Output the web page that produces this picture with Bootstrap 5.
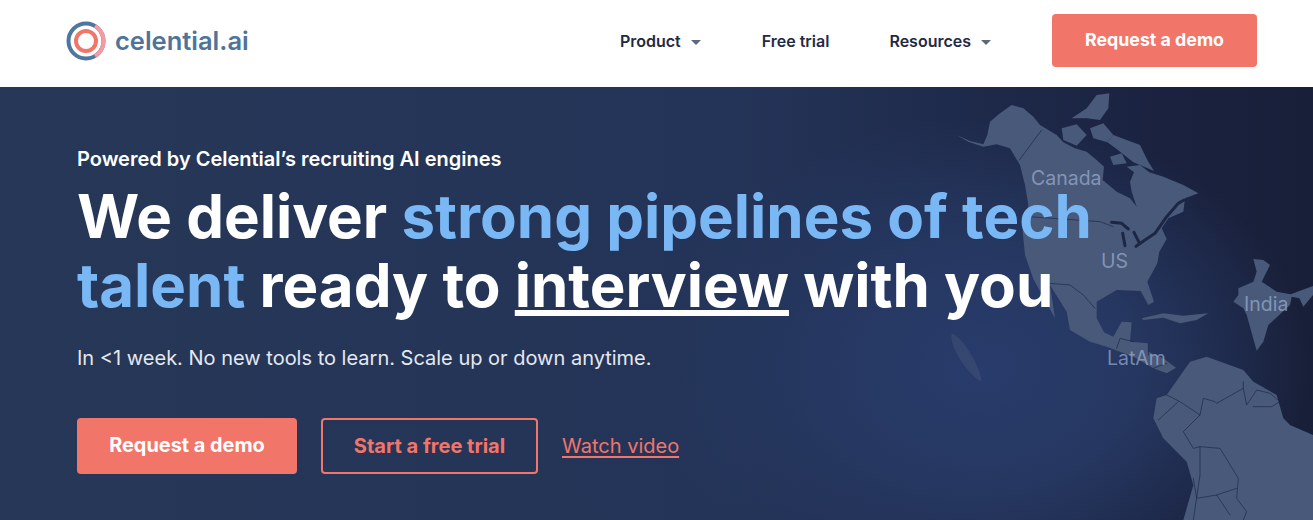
<!doctype html>
<html lang="en"><head><meta charset="utf-8"><title>celential.ai</title>
<link href="https://cdn.jsdelivr.net/npm/bootstrap@5.3.0/dist/css/bootstrap.min.css" rel="stylesheet">
<style>
body{font-family:Inter,"Liberation Sans",sans-serif;background:#1c2642;overflow:hidden;height:520px}
.top-bar{height:87px;background:#fff;padding:0 56px 6px 66px}
.brand-name{font-size:25.5px;font-weight:600;color:#4f7399;line-height:1;margin-left:1px}
.top-link{font-size:16px;font-weight:600;color:#1f2a44;text-decoration:none;line-height:1}
.caret-mark{display:inline-block;width:0;height:0;border-left:5.5px solid transparent;border-right:5.5px solid transparent;border-top:5.5px solid #5c6780;margin-left:10px;vertical-align:2px}
.link-list{gap:60px;margin-right:61px}
.wide-caret{margin-right:1px}
.coral-btn{background:#f2756a;color:#fff;border:0;border-radius:4px;font-weight:700;display:inline-flex;align-items:center;justify-content:center}
.coral-btn:hover{background:#f2756a;color:#fff}
.nav-cta{width:205px;height:53px;font-size:17.8px}
.hero-band{height:433px;padding:59px 0 0 77px;overflow:hidden;
background:radial-gradient(ellipse 330px 250px at 980px 280px,#283b6b 0%,#263862 45%,rgba(36,52,88,0) 100%),linear-gradient(90deg,#273757 0%,#243458 55%,#1f2b4c 72%,#1a2240 88%,#181f38 100%)}
.hero-content{z-index:2}
.pre-title{font-size:20px;font-weight:600;color:#fff;line-height:26px;margin:0 0 10px}
.main-title{font-size:60px;font-weight:700;color:#fff;line-height:69px;margin:0 0 24px;width:1040px;letter-spacing:-.01px}
.sky{color:#7ab8f5}
.main-title u{text-decoration-thickness:6px;text-underline-offset:3px}
.sub-title{font-size:20px;color:#e4e8f0;line-height:28px;margin:0 0 46px}
.hero-cta{width:220px;height:56px;font-size:19.9px}
.ghost-btn{width:217px;height:56px;background:transparent;border:2px solid #f2756a;color:#f2756a;border-radius:4px;font-weight:700;font-size:20px;display:inline-flex;align-items:center;justify-content:center;margin-left:24px}
.ghost-btn:hover{background:transparent;color:#f2756a}
.video-link{color:#f2756a;font-size:20px;margin-left:24px;text-underline-offset:3px}
.video-link:hover{color:#f2756a}
.map-art{position:absolute;right:0;top:-2px;width:413px;height:435px;z-index:1}
.geo-label{position:absolute;font-size:19.5px;line-height:24px;color:rgba(170,190,220,.62);z-index:3}
.at-ca{left:1031px;top:79px}.at-us{left:1101px;top:162px}.at-in{left:1244px;top:205px}.at-la{left:1107px;top:259px}
</style></head>
<body>
<nav class="top-bar d-flex align-items-center justify-content-between">
  <a href="#" class="d-flex align-items-center text-decoration-none gap-2">
    <svg width="40" height="40" viewBox="0 0 40 40" aria-label="logo">
      <circle cx="20" cy="20" r="17.5" fill="none" stroke="#4d76a0" stroke-width="4"/>
      <path d="M29 5 A17.5 17.5 0 0 1 29 35" fill="none" stroke="#f49aa0" stroke-width="4"/>
      <circle cx="20" cy="20" r="10" fill="none" stroke="#f2756a" stroke-width="4"/>
    </svg>
    <span class="brand-name">celential.ai</span>
  </a>
  <div class="d-flex align-items-center">
    <div class="d-flex align-items-center link-list">
      <a class="top-link" href="#">Product<span class="caret-mark wide-caret"></span></a>
      <a class="top-link" href="#">Free trial</a>
      <a class="top-link" href="#">Resources<span class="caret-mark"></span></a>
    </div>
    <a href="#" class="btn coral-btn nav-cta">Request a demo</a>
  </div>
</nav>
<section class="hero-band position-relative">
  <svg class="map-art" viewBox="0 0 1239 1305" aria-hidden="true">
    <g fill="#49597a">
      <path d="M170 150L210 168 250 178 262 150 270 110 300 85 335 60 370 70 400 95 420 120 470 150 490 172 525 190 560 200 590 225 612 245 608 285 650 320 690 340 710 365 695 320 690 290 702 262 680 245 720 240 748 262 790 275 850 300 895 325 855 340 850 380 805 400 785 430 800 462 778 500 772 535 742 590 762 650 745 660 722 618 650 615 590 650 590 700 612 742 640 755 665 710 695 712 690 770 745 775 745 800 790 820 828 848 800 865 760 850 700 815 620 785 570 770 510 735 500 680 450 600 465 700 440 655 400 582 375 510 368 440 385 360 375 300 360 240 330 190 290 178 250 185 205 170Z"/>
      <path d="M770 940L800 930 870 830 920 815 1030 855 1060 890 1130 930 1150 1000 1170 1020 1239 1050V1305H850L880 1200 860 1130 790 1060 760 1000Z"/>
      <path d="M1060 522L1090 525 1110 540 1085 590 1130 620 1172 628 1239 603V630L1210 665 1198 640 1175 635 1170 660 1105 720 1090 770 1070 797 1040 690 1030 670 1000 650 1015 630 1015 610 1060 590 1070 560Z"/>
      <path d="M725 700L790 685 850 692 925 685 890 705 840 715 790 698 730 705Z"/>
      <path d="M590 30L628 25 625 70 600 105 560 100 515 100 560 70Z"/>
      <path d="M485 130L530 118 560 150 530 182 490 165Z"/>
      <path d="M570 130L610 115 640 150 622 172 580 160Z"/>
      <path d="M640 150L720 180 742 225 762 258 700 232 650 192 622 172Z"/>
      <path d="M630 215L665 205 680 235 640 240Z"/>
    </g>
    <path d="M155 745C185 755 240 840 245 890 215 880 145 790 155 745Z" fill="#49597a" opacity=".42"/>
    <g fill="none" stroke="#1d2744" stroke-linecap="round" stroke-linejoin="round">
      <path stroke-width="9" d="M635 412L665 415 685 432M668 445L675 482M702 442L716 470M708 484L735 465 765 445 800 395 835 355 852 345"/>
      <path stroke-width="2" d="M425 135L358 225"/>
      <path stroke-width="2" d="M385 395L600 410 640 425"/>
      <path stroke-width="2" d="M450 595L510 600 550 630 585 670"/>
      <path stroke-width="2" d="M800 930L840 950 900 990 850 1040 880 1090 900 1085 900 1170 880 1305"/>
      <path stroke-width="2" d="M775 1005L835 950M900 990L910 940 945 950 950 955 1030 910 1030 890M1030 910L1040 960 1070 915 1110 925 1140 950 1115 965 1060 965"/>
      <path stroke-width="2" d="M900 1085L960 1090 1015 1180 1010 1240 1040 1280 1030 1305M950 1230L1010 1210M880 1180L890 1240 950 1230 990 1290"/>
      <path stroke-width="2" d="M650 790L660 760 700 770M745 775L745 810M760 850L800 835"/>
    </g>
  </svg>
  <span class="geo-label at-ca">Canada</span>
  <span class="geo-label at-us">US</span>
  <span class="geo-label at-in">India</span>
  <span class="geo-label at-la">LatAm</span>
  <div class="hero-content position-relative">
    <p class="pre-title">Powered by Celential’s recruiting AI engines</p>
    <h1 class="main-title">We deliver <span class="sky">strong pipelines of tech talent</span> ready to <u>interview</u> with you</h1>
    <p class="sub-title">In &lt;1 week. No new tools to learn. Scale up or down anytime.</p>
    <div class="d-flex align-items-center">
      <a href="#" class="btn coral-btn hero-cta">Request a demo</a>
      <a href="#" class="btn ghost-btn">Start a free trial</a>
      <a href="#" class="video-link">Watch video</a>
    </div>
  </div>
</section>
<script src="https://cdn.jsdelivr.net/npm/bootstrap@5.3.0/dist/js/bootstrap.bundle.min.js"></script>
</body></html>
